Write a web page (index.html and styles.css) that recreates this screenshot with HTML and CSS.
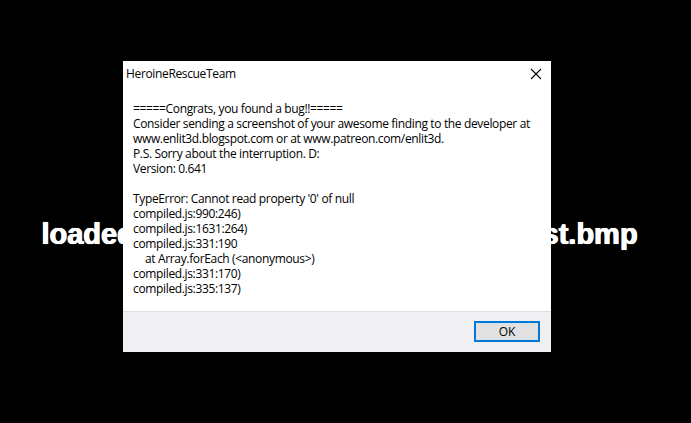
FILE: index.html
```html
<!DOCTYPE html>
<html lang="en">
<head>
  <meta charset="UTF-8">
  <meta name="viewport" content="width=device-width, initial-scale=1.0">
  <title>HeroineRescueTeam</title>
  <link rel="stylesheet" href="styles.css">
</head>
<body>
  <div class="screen">
    <!-- loading text behind the message box -->
    <div class="loading">loaded: img/pictures/Heroine_BG_test.bmp</div>

    <div class="msgbox">
      <div class="titlebar">
        <span class="title">HeroineRescueTeam</span>
        <a href="javascript:;" class="close">
          <svg width="12" height="12" viewBox="0 0 12 12">
            <path d="M1 1 L11 11 M11 1 L1 11" stroke="#000" stroke-width="1.1" fill="none"/>
          </svg>
        </a>
      </div>
      <div class="content">
        <p>=====Congrats, you found a bug!!=====</p>
        <p>Consider sending a screenshot of your awesome finding to the developer at</p>
        <p>www.enlit3d.blogspot.com or at www.patreon.com/enlit3d.</p>
        <p>P.S. Sorry about the interruption. D:</p>
        <p>Version: 0.641</p>
        <p>&nbsp;</p>
        <p>TypeError: Cannot read property '0' of null</p>
        <p>compiled.js:990:246)</p>
        <p>compiled.js:1631:264)</p>
        <p>compiled.js:331:190</p>
        <p class="indent">at Array.forEach (&lt;anonymous&gt;)</p>
        <p>compiled.js:331:170)</p>
        <p>compiled.js:335:137)</p>
      </div>
      <div class="footer">
        <button class="ok">OK</button>
      </div>
    </div>
  </div>
</body>
</html>
```

FILE: styles.css
```css
html, body{
  margin: 0;
  padding: 0;
  background-color: #000;
}

.screen{
  position: relative;
  width: 691px;
  height: 423px;
  overflow: hidden;
}

.loading{
  padding: 216px 12px 0 0;
  text-align: center;
  white-space: nowrap;
  font-family: "Liberation Sans", Arial, sans-serif;
  font-weight: bold;
  font-size: 29px;
  line-height: 36px;
  color: #fff;
  text-shadow: 0.5px 0 0 #fff, -0.5px 0 0 #fff, 0 0 1px #ccc;
}

.msgbox{
  position: absolute;
  left: 123px;
  top: 61px;
  width: 428px;
  height: 291px;
  display: flex;
  flex-direction: column;
  background-color: #fff;
  font-family: "Open Sans", "Noto Sans", sans-serif;
  font-size: 12px;
  letter-spacing: -0.35px;
  color: #000;
}

.titlebar{
  height: 25px;
  display: flex;
  align-items: center;
  justify-content: space-between;
  padding: 0 9px 0 3px;
}

.close{
  display: flex;
  width: 12px;
  height: 12px;
}

.content{
  flex: 1;
  padding: 15px 10px 0;
}

.content p{
  margin: 0;
  line-height: 15px;
  white-space: nowrap;
}

.content .indent{
  padding-left: 12px;
}

.footer{
  height: 41px;
  display: flex;
  justify-content: flex-end;
  padding: 9px 11px 0 0;
  box-sizing: border-box;
  background-color: #f0eff2;
  border-top: 1px solid #dfdfdf;
}

.ok{
  width: 66px;
  height: 21px;
  margin: 0;
  padding: 0;
  border: 2px solid #0078d7;
  background-color: #e1e1e1;
  font-family: "Open Sans", "Noto Sans", sans-serif;
  font-size: 12px;
  color: #000;
}
```
